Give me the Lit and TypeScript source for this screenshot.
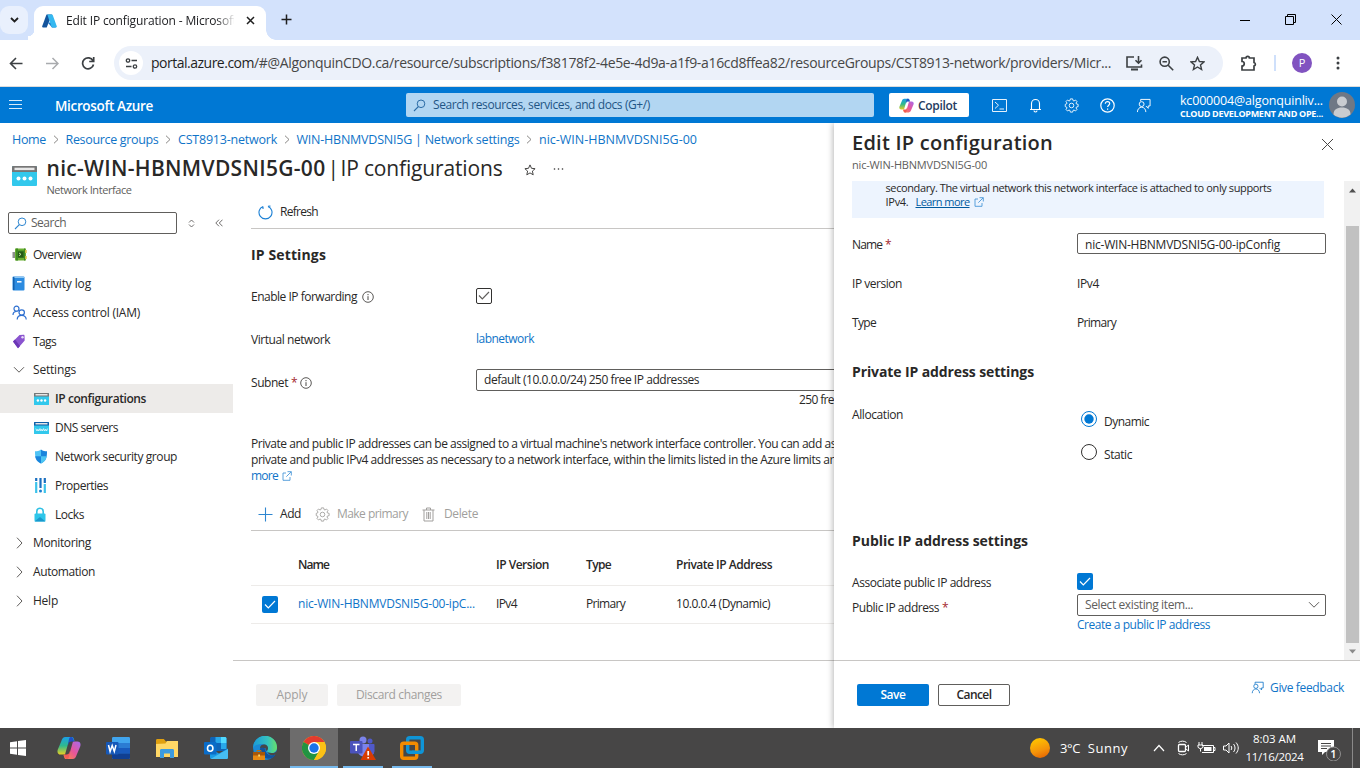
import { LitElement, html, svg, css, nothing } from "lit";
import { customElement, property } from "lit/decorators.js";

/** Text run whose tracking is adjusted so that it takes the requested width. */
@customElement("fit-text")
class FitText extends LitElement {
  @property({ type: Number }) w = 0;
  static styles = css`
    :host { display: inline-block; white-space: pre; flex: none; }
  `;
  render() { return html`<slot></slot>`; }
  updated() {
    this.style.letterSpacing = "0px";
    const r = document.createRange();
    r.selectNodeContents(this);
    const natural = r.getBoundingClientRect().width;
    const n = (this.textContent || "").length;
    if (this.w && n) this.style.letterSpacing = ((this.w - natural) / n).toFixed(3) + "px";
  }
}

const t = (text: string, w: number, cls = "") => html`<fit-text class=${cls} .w=${w}>${text}</fit-text>`;
const ico = (w: number, h: number, body: unknown, vb = `0 0 ${w} ${h}`, cls = "") =>
  html`<svg class="i ${cls}" width=${w} height=${h} viewBox=${vb} fill="none">${body}</svg>`;

const nicIcon = (w: number, h: number, dns = false) => ico(w, h, svg`
  <rect width="25" height="20" rx="1" fill="#32c8ec"/>
  <path d="M0 1a1 1 0 0 1 1-1h23a1 1 0 0 1 1 1v5H0z" fill=${dns ? "#0f5ea8" : "#767676"}/>
  <rect x="2.5" y="1.7" width="20" height="2.4" fill="#e8e8e8"/>
  ${dns
    ? svg`<path d="M3 11l2 4 1.500-3 1.500 3 2-4M10 11l1.500 4 1.500-3 1.500 3 1.500-4M16 11l2 4 1.500-3 1.500 3 1.500-4" stroke="#fff" stroke-width="1.200"/>`
    : svg`<circle cx="6.500" cy="12.500" r="2" fill="#fff"/><circle cx="12.500" cy="12.500" r="2" fill="#fff"/><circle cx="18.500" cy="12.500" r="2" fill="#fff"/>`}`, "0 0 25 20");

const gearPath = "M6.700 1h2.600l.4 1.900 1.100.5 1.700-1.100 1.700 1.700-1.100 1.700.5 1.100 1.900.4v2.600l-1.900.4-.5 1.100 1.100 1.700-1.700 1.700-1.700-1.100-1.100.5-.4 1.900H6.700l-.4-1.900-1.100-.5-1.700 1.100-1.700-1.700 1.100-1.700-.5-1.100L.9 9.800V7.200l1.500-.4.5-1.100-1.100-1.700 1.700-1.700 1.700 1.100 1.100-.5z";
const gear = (c: string, s = 15) => ico(s, s, svg`<path d=${gearPath} stroke=${c} stroke-width="1"/><circle cx="8" cy="8.500" r="2.600" stroke=${c}/>`, "0 0 16 17");
const feedback = (c: string, s = 15) => ico(s, s, svg`<path d="M5 3.500V1.500h10v7h-2v2.500l-2.500-2.500" stroke=${c}/><circle cx="6" cy="6.500" r="2.600" stroke=${c}/><path d="M1.500 15c0-3 2-5.200 4.500-5.200s4.500 2.200 4.500 5.200" stroke=${c}/>`, "0 0 16 16");
const check = (c = "#fff") => ico(12, 9, svg`<path d="M1 4.500l3.300 3.300L11 1" stroke=${c} stroke-width="1.200"/>`);
const info = ico(12, 12, svg`<circle cx="6" cy="6" r="5.300" stroke="#484644" stroke-width=".9"/><path d="M6 5.200v3.800M6 3v1.200" stroke="#484644" stroke-width="1"/>`);
const ext = ico(10, 10, svg`<path d="M4 2H1v7.300h7V6M5.500.7h3.800v3.800M9.200.8L4.300 5.700" stroke="#4a97d8" stroke-width=".9"/>`);
const mag = (c: string) => ico(13, 13, svg`<circle cx="8" cy="4.800" r="3.800" stroke=${c} stroke-width="1"/><path d="M5.300 7.600L1 12" stroke=${c} stroke-width="1.100"/>`);
const chevR = ico(7, 12, svg`<path d="M1 .7l5 5.300-5 5.300" stroke="#605e5c" stroke-width="1"/>`);
const chevD = ico(12, 8, svg`<path d="M1 1.200l5 5 5-5" stroke="#605e5c" stroke-width="1"/>`);
const crumb = ico(6, 9, svg`<path d="M1 .7l4 3.800-4 3.800" stroke="#7a7876" stroke-width=".9"/>`);

const copilot = (s: number) => html`<svg class="i" width=${s} height=${s} viewBox="0 0 24 24">
  <defs>
    <linearGradient id="ca" x1="0" y1="0" x2="0" y2="1"><stop offset="0" stop-color="#1a9fe8"/><stop offset=".5" stop-color="#2fb98d"/><stop offset="1" stop-color="#e8cf22"/></linearGradient>
    <linearGradient id="cb" x1="1" y1="0" x2="0" y2="1"><stop offset="0" stop-color="#a56af0"/><stop offset=".5" stop-color="#e8559a"/><stop offset="1" stop-color="#ff8f3c"/></linearGradient>
  </defs>
  <path d="M15 1H8.500C6 1 5 3 4.200 5.500L.8 13.500c-1 3 .3 5 2.900 5H8l3-10.500c.5-2 1.300-3 3.300-3h3.200L16.700 2.500C16.300 1.500 15.700 1 15 1z" fill="url(#ca)"/>
  <path d="M9 23h6.500c2.500 0 3.500-2 4.300-4.500l3.400-8c1-3-.3-5-2.900-5H16l-3 10.500c-.5 2-1.300 3-3.300 3H6.500l.8 2.500c.4 1 1 1.500 1.700 1.500z" fill="url(#cb)"/>
  <path d="M14.500 1c1.500 0 1.900 2.300 2.700 4.500H14c-1.400 0-2 .9-2.500 2.500L10.800 9.500 12 3c.4-1.400 1-2 2.500-2z" fill="#1f50c8"/>
  <path d="M9.500 23c-1.500 0-1.900-2.300-2.700-4.500H10c1.400 0 2-.9 2.500-2.500l.7-1.500L12 21c-.4 1.400-1 2-2.500 2z" fill="#f25a56"/>
</svg>`;

const sideIcons: Record<string, unknown> = {
  overview: ico(15, 15, svg`<path d="M3 1.500h11v12H3z" fill="#6aaf33"/><path d="M.5 5H3v6H.5z" fill="#8b8f8b"/><path d="M4 1.500v12h2v-2.500h6v2.500h1v-12h-1v2H6v-2z" fill="#3f8a22"/><rect x="6" y="4.500" width="5.500" height="6" fill="#265a18"/><path d="M7 6l2 1.300L7 8.700" stroke="#bfe39a"/><path d="M13 3h1.700v3H13zM13 9h1.700v3H13z" fill="#d8c043"/>`),
  log: ico(13, 15, svg`<rect x=".5" y=".5" width="12" height="14" rx="1" fill="#2c8be0"/><path d="M1 1h1.500v13H1z" fill="#1260ae"/><path d="M2.500 1.500h9.500" stroke="#8cc8f5"/><path d="M5 5.800h4.500" stroke="#fff" stroke-width="1.500"/>`),
  iam: ico(15, 15, svg`<circle cx="4.500" cy="3.700" r="2.500" stroke="#2d6fd0" stroke-width="1.200"/><path d="M1 10c0-2.200 1.500-3.500 3.500-3.500" stroke="#2d6fd0" stroke-width="1.200"/><circle cx="9.700" cy="7.500" r="2.700" stroke="#2d6fd0" stroke-width="1.200"/><path d="M5.200 14.500c0-2.600 2-4.200 4.500-4.200s4.500 1.600 4.500 4.200" stroke="#2d6fd0" stroke-width="1.200"/>`),
  tags: ico(15, 15, svg`<path d="M1 7.500L7.500 1l4-.2c.8 0 1 .4 1 1l.2 4.700L6 14.300z" fill="#8a54cf"/><path d="M1 7.500L6 14.300l2-2.300L3 5.500z" fill="#6b36b5"/><circle cx="10.500" cy="3.200" r="1.200" fill="#e9dcf8"/>`),
  ip: nicIcon(15, 12),
  dns: nicIcon(15, 12, true),
  nsg: ico(14, 15, svg`<path d="M7 .5c2 1.500 4 1.800 6 1.800 0 6-.5 9.500-6 12.200z" fill="#1a84dc"/><path d="M7 .5C5 2 3 2.300 1 2.300c0 6 .5 9.500 6 12.200z" fill="#4fc3f5"/><path d="M7 7.300h5.700c-.5 3.500-2 5.500-5.700 7.200z" fill="#4cc5f2"/><path d="M7 7.300H1.200c.6 3.500 2 5.500 5.800 7.200z" fill="#1a84dc"/>`),
  props: ico(13, 15, svg`<path d="M2.200 0v3M6.500 0v10M10.800 0v5" stroke="#1a6fc0" stroke-width="2.200"/><path d="M2.200 4v11M10.800 6v9" stroke="#3cc3ea" stroke-width="2.200"/><circle cx="6.500" cy="13" r="1.500" fill="#1a7fd0"/>`),
  locks: ico(12, 15, svg`<path d="M2.800 7V4.500a3.200 3.200 0 0 1 6.400 0V7" stroke="#2fc0e4" stroke-width="1.600"/><rect x=".5" y="6.500" width="11" height="8" rx="1" fill="#2ec6ea"/><path d="M.5 14.500l5.500-4.500 5.500 4.500z" fill="#1a98cc"/>`),
};

type Nav = { label: string; w: number; icon?: string; kind?: "group" | "open" | "sub"; on?: boolean };
const nav: Nav[] = [
  { label: "Overview", w: 48, icon: "overview" },
  { label: "Activity log", w: 58, icon: "log" },
  { label: "Access control (IAM)", w: 107, icon: "iam" },
  { label: "Tags", w: 23, icon: "tags" },
  { label: "Settings", w: 43, kind: "open" },
  { label: "IP configurations", w: 91, icon: "ip", kind: "sub", on: true },
  { label: "DNS servers", w: 63, icon: "dns", kind: "sub" },
  { label: "Network security group", w: 122, icon: "nsg", kind: "sub" },
  { label: "Properties", w: 53, icon: "props", kind: "sub" },
  { label: "Locks", w: 29, icon: "locks", kind: "sub" },
  { label: "Monitoring", w: 58, kind: "group" },
  { label: "Automation", w: 62, kind: "group" },
  { label: "Help", w: 25, kind: "group" },
];

@customElement("app-root")
class AppRoot extends LitElement {
  static styles = css`
    :host { display: flex; flex-direction: column; width: 1360px; height: 768px; overflow: hidden; background: #fff;
      font: 12px/16px "Open Sans", "Noto Sans", sans-serif; color: #292827; }
    * { box-sizing: border-box; }
    .i { display: block; flex: none; }
    .row { display: flex; align-items: center; }
    .link { color: #0f74c8; }
    .semi { font-weight: 600; }

    /* browser chrome */
    .tabs { height: 40px; flex: none; background: #d3e2fc; display: flex; align-items: flex-end; }
    .drop { width: 28px; height: 28px; margin-bottom: 6px; border-radius: 9px; background: #e9f0fd; display: grid; place-items: center; }
    .flare { width: 6px; height: 10px; background: radial-gradient(circle at 0 0, #d3e2fc 6px, #fff 6.500px); }
    .flare.r { width: 10px; background: radial-gradient(circle at 100% 0, #d3e2fc 9.500px, #fff 10px); }
    .tab { width: 232px; height: 34px; background: #fff; border-radius: 9px 9px 0 0; display: flex; align-items: center; padding: 0 11px 4px 8px; color: #202124; }
    .tab .name { margin-left: 9px; width: 168px; overflow: hidden; white-space: nowrap; mask-image: linear-gradient(90deg, #000 150px, transparent 170px); }
    .tab .x { margin: -2px 0 0 12px; }
    .plus { margin: 0 0 15px 5px; }
    .win { margin-left: auto; display: flex; gap: 35px; padding: 0 18px 15px 0; align-items: center; }
    .bar { height: 47px; flex: none; border-bottom: 1px solid #dcdcdc; display: flex; align-items: center; padding: 0 14px 0 9px; background: #fff; }
    .omni { margin-left: 19px; width: 1109px; height: 34px; border-radius: 17px; background: #ecf1fa; display: flex; align-items: center; padding-left: 5px; font-size: 14px; color: #474747; }
    .omni .tune { width: 24px; height: 24px; border-radius: 50%; background: #fff; display: grid; place-items: center; margin-right: 8px; }
    .omni .dark { color: #1f1f1f; }
    .omni .tools { display: flex; gap: 16px; margin-left: 15px; align-items: center; }
    .sep { width: 2px; height: 16px; background: #cfe0fb; margin: 0 16px 0 17px; }
    .pfp { width: 20px; height: 20px; border-radius: 50%; background: #8153c0; color: #fff; display: grid; place-items: center; font-size: 11px; margin-right: 24px; }

    /* portal header */
    .az { height: 36px; flex: none; background: #0078d4; display: flex; align-items: center; color: #fff; padding-left: 9px; }
    .brand { font-size: 13.500px; font-weight: 600; margin: 2px 0 0 33px; }
    .find { margin-left: 253px; width: 468px; height: 24px; background: #b2d6f2; border-radius: 2px; color: #1f5585; display: flex; align-items: center; gap: 7px; padding-left: 7px; }
    .cop { margin-left: 15px; width: 80px; height: 24px; border-radius: 2px; background: #fff; color: #243a5e; display: flex; align-items: center; gap: 4px; padding-left: 10px; font-weight: 600; }
    .cop fit-text { margin-top: 2px; }
    .hi { display: flex; margin-left: 13px; }
    .hi > div { width: 36px; height: 36px; display: grid; place-items: center; }
    .who { display: flex; flex-direction: column; margin-left: 18px; height: 27px; width: 149px; }
    .who .a { font-size: 12.500px; line-height: 15px; margin-top: 1px; }
    .who .b { font-size: 9px; line-height: 12px; font-weight: 700; }

    /* portal body */
    .body { flex: 1; min-height: 0; display: flex; }
    .left { width: 834px; height: 605px; overflow: hidden; display: flex; flex-direction: column; flex: none; }
    .crumbs { height: 33px; display: flex; align-items: center; gap: 6.750px; padding-left: 12px; flex: none; font-size: 12.500px; color: #0f74c8; }
    .title { height: 49px; display: flex; padding-left: 12px; flex: none; }
    .title > .i { margin-top: 10px; }
    .tt { margin: -1px 0 0 9.500px; display: flex; flex-direction: column; }
    .tt .h { font-size: 21px; line-height: 26px; display: flex; }
    .tt .bar1 { margin: 0 6px 0 2px; }
    .tt .s { font-size: 11px; line-height: 15px; margin-top: 1px; color: #605e5c; }
    .title > .dots { margin: 7px 0 0 17px; }
    .title > .star { margin: 8px 0 0 22px; }
    .cols { display: flex; flex: 1; min-height: 0; }
    .side { width: 233px; flex: none; padding-top: 7px; }
    .sr { display: flex; align-items: center; margin-bottom: 6px; padding-left: 8px; }
    .sbox { width: 169px; height: 22px; border: 1px solid #605e5c; border-radius: 2px; display: flex; align-items: center; gap: 4px; padding-left: 5px; color: #605e5c; }
    .sr .ud { margin-left: 11px; } .sr .cc { margin-left: 20px; }
    .nv { height: 29px; display: flex; align-items: center; padding-left: 12px; }
    .nv .sl { width: 21px; display: flex; align-items: center; }
    .nv fit-text { margin-top: 1px; }
    .nv.open { height: 28px; padding-bottom: 1px; } .nv.open .sl { padding-left: 1px; } .nv.group .sl { padding-left: 4px; }
    .nv.group { padding-bottom: 2px; }
    .nv.sub { padding-left: 34px; }
    .nv.on { background: #edebe9; font-weight: 600; }

    .main { flex: 1; min-width: 0; display: flex; flex-direction: column; }
    .scroll { height: 455px; padding-left: 18px; flex: none; overflow: hidden; }
    .refresh { height: 24px; border-bottom: 1px solid #c8c6c4; padding: 0 0 9px 7px; display: flex; align-items: center; gap: 7px; margin-bottom: 10px; }
    .h3 { font-size: 14px; font-weight: 700; line-height: 32px; height: 32px; }
    .main .h3 { display: block; margin-bottom: 3px; }
    .f { display: flex; align-items: center; height: 43px; width: 700px; }
    .f .l { width: 225px; display: flex; align-items: center; gap: 5px; padding-top: 3px; flex: none; }
    .f .req { margin: 0 -1px 0 -2px; }
    .req { color: #a4262c; }
    .cb { width: 16px; height: 16px; border-radius: 2px; display: grid; place-items: center; flex: none; }
    .cb.ol { border: 1px solid #323130; }
    .cb.fill { background: #0078d4; height: 17px; }
    .inp { height: 22px; border: 1px solid #605e5c; border-radius: 2px; display: flex; align-items: center; padding-left: 7px; flex: none; }
    .wide { width: 460px; margin-top: -4px; }
    .free { padding-left: 548px; height: 16px; margin-top: -11px; white-space: nowrap; }
    .para { margin-top: 28px; display: flex; flex-direction: column; align-items: flex-start; }
    .para .row { gap: 4px; }
    .cmd { height: 33px; margin-top: 14px; border-bottom: 1px solid #c8c6c4; display: flex; align-items: center; padding-left: 7px; width: 700px; gap: 14px; }
    .dis { color: #a19f9d; }
    .cmd > .g { display: flex; align-items: center; gap: 7px; }
    .cmd > .c3 { gap: 9px; }
    .tr { display: grid; grid-template-columns: 47px 198px 90px 90px 200px; align-items: center; width: 700px; height: 38px; border-bottom: 1px solid #edebe9; padding-bottom: 1px; }
    .tr.hd { height: 55px; padding: 14px 0 0; font-weight: 600; }
    .tr .cb { margin-left: 11px; }
    .foot { border-top: 1px solid #c8c6c4; height: 68px; display: flex; padding: 23px 0 0 23px; gap: 9px; flex: none; }
    .btn { height: 22px; border-radius: 2px; display: grid; place-items: center; font-weight: 600; flex: none; width: 72px; }
    .btn.off { background: #f3f2f1; color: #a19f9d; font-weight: 500; }
    .btn.w2 { width: 124px; }
    .btn.pri { background: #0078d4; color: #fff; }
    .btn.sec { border: 1px solid #605e5c; background: #fff; }

    /* edit panel */
    .panel { width: 526px; height: 605px; background: #fff; box-shadow: -1px 0 6px rgba(0, 0, 0, .28); clip-path: inset(0 0 0 -12px); display: flex; flex-direction: column; position: relative; }
    .ph { height: 58px; display: flex; justify-content: space-between; padding: 6px 26px 0 18px; flex: none; }
    .ph .c { display: flex; flex-direction: column; }
    .ph .h { font-size: 20px; line-height: 27px; font-weight: 600; }
    .ph .s { font-size: 11px; line-height: 16px; margin-top: 1px; color: #605e5c; }
    .ph > .i { margin-top: 9px; }
    .pb { height: 479px; display: flex; flex: none; }
    .form { width: 510px; padding-left: 18px; }
    .note { height: 37px; width: 472px; background: #edf4fe; padding-left: 33.500px; font-size: 11px; line-height: 14px; display: flex; flex-direction: column; margin-bottom: 7px; }
    .note .row { gap: 4px; }
    .u { text-decoration: underline; color: #005a9e; margin-left: 3px; }
    .pf { display: flex; align-items: center; height: 39px; }
    .pf .l { width: 225px; flex: none; display: flex; gap: 3px; padding-top: 1px; }
    .pf > .inp { margin-top: -2px; height: 21px; padding-top: 2px; }
    .w249 { width: 249px; }
    .ph3 { margin-top: 14px; }
    .radios { padding: 10px 0 0 4px; display: flex; flex-direction: column; gap: 16px; }
    .radio { display: flex; height: 17px; gap: 7px; }
    .radio fit-text { margin-top: 3px; }
    .alloc { display: flex; align-items: flex-start; height: 137px; padding-top: 13px; }
    .alloc .l { width: 225px; padding-top: 6px; }
    .assoc { height: 26px; margin-top: 11px; }
    .assoc .l { padding-top: 3px; }
    .pub { height: 22px; } .pub .l { padding-top: 6px; }
    .pub > .inp { margin-top: 0; height: 22px; padding-top: 0; }
    .sel { justify-content: space-between; padding-right: 5px; color: #605e5c; }
    .create { padding-left: 225px; margin-top: 1px; }
    .sb { width: 16px; background: #f1f1f1; display: flex; flex-direction: column; align-items: center; padding: 7px 0 6px 1px; }
    .thumb { width: 13px; height: 417px; background: #c1c1c1; margin: 33px 0 auto; flex: none; }
    .pfoot { border-top: 1px solid #c8c6c4; flex: 1; display: flex; padding: 23px 16px 0 23px; gap: 9px; }
    .fb { margin-left: auto; display: flex; gap: 6px; height: 16px; margin-top: -4px; align-items: center; }
    .fb .i { margin-top: -2px; }

    /* taskbar */
    .task { height: 40px; flex: none; background: #474646; display: flex; color: #fff; font-size: 13px; }
    .app { width: 49px; height: 40px; display: grid; place-items: center; }
    .app.start { width: 36px; margin-right: 8px; }
    .app.active { width: 48px; background: #6d6c6c; border-bottom: 2px solid #76b9ed; padding-top: 2px; margin-left: 1px; }
    .app.run { width: 40px; border-bottom: 2px solid #76b9ed; margin-left: 5px; padding-top: 2px; }
    .app.run + .run { margin-left: 9px; }
    .tray { margin-left: auto; display: flex; align-items: center; }
    .sun { width: 20px; height: 20px; border-radius: 50%; background: linear-gradient(160deg, #ffc400 10%, #f5930a 60%, #e05a00); margin-right: 10px; }
    .clock { display: flex; flex-direction: column; align-items: center; font-size: 11.500px; line-height: 18px; width: 65px; margin-left: 2px; padding-bottom: 1px; }
    .edge { width: 1px; height: 40px; background: #8a8989; margin: 0 7px 0 11px; }
  `;

  chrome() {
    return html`
      <div class="tabs">
        <div class="drop">${ico(9, 6, svg`<path d="M1 1l3.500 3.500L8 1" stroke="#1f1f1f" stroke-width="1.800"/>`)}</div>
        <div class="flare"></div>
        <div class="tab">
          ${ico(15, 14, svg`<path d="M5 .5h5L4.700 13.500H1c-.8 0-1-.6-.8-1.200L4.300 1c.2-.4.400-.5.700-.5z" fill="#14549c"/><path d="M5.800 8.500h6l2 5H10z" fill="#1272c8"/><path d="M5.300.5H10c.4 0 .6.200.7.500l4.100 11.300c.2.600-.1 1.200-.8 1.200h-3.500c-.6 0-.9-.5-1.100-1z" fill="#35b8f0"/>`)}
          <div class="name">${t("Edit IP configuration - Microsoft", 171)}</div>
          <span class="x">${ico(9, 9, svg`<path d="M1 1l7 7M8 1L1 8" stroke="#1f1f1f" stroke-width="1.500"/>`)}</span>
        </div>
        <div class="flare r"></div>
        <div class="plus">${ico(11, 11, svg`<path d="M5.500.500v10M.5 5.500h10" stroke="#1f1f1f" stroke-width="1.500"/>`)}</div>
        <div class="win">
          ${ico(10, 10, svg`<path d="M0 5.500h10" stroke="#000"/>`)}
          ${ico(11, 11, svg`<path d="M.5 2.500h8v8h-8zM2.500 2.500v-2h8v8h-2" stroke="#000"/>`)}
          ${ico(11, 11, svg`<path d="M.5.5l10 10M10.500.5l-10 10" stroke="#000"/>`)}
        </div>
      </div>
      <div class="bar">
        ${ico(14, 13, svg`<path d="M13.500 6.500h-12M7 1L1.500 6.500 7 12" stroke="#3c4043" stroke-width="1.600"/>`)}
        ${ico(36, 13, svg`<path d="M23 6.500h12M29.500 1L35 6.500 29.500 12" stroke="#a9abae" stroke-width="1.500"/>`)}
        ${ico(36, 14, svg`<path d="M34 4.800A5.500 5.500 0 1 0 34.500 8.500M34.700 1v4.500h-4.500" stroke="#3c4043" stroke-width="1.700"/>`)}
        <div class="omni">
          <div class="tune">${ico(13, 11, svg`<circle cx="3" cy="2.500" r="1.700" stroke="#3c4043" stroke-width="1.300"/><path d="M6.500 2.500H12M1 8.500h5.500" stroke="#3c4043" stroke-width="1.500"/><circle cx="10" cy="8.500" r="1.700" stroke="#3c4043" stroke-width="1.300"/>`)}</div>
          ${t("portal.azure.com", 103, "dark")}${t("/#@AlgonquinCDO.ca/resource/subscriptions/f38178f2-4e5e-4d9a-a1f9-a16cd8ffea82/resourceGroups/CST8913-network/providers/Micr...", 857)}
          <div class="tools">
            ${ico(17, 15, svg`<path d="M8 1H1v10h14.500V8.500" stroke="#3c4043" stroke-width="1.600"/><path d="M5 12.500h7v2H5z" fill="#3c4043"/><path d="M12.500 0v7M9.500 4.200l3 3 3-3" stroke="#3c4043" stroke-width="1.600"/>`)}
            ${ico(15, 15, svg`<circle cx="5.700" cy="5.700" r="4.600" stroke="#3c4043" stroke-width="1.600"/><path d="M9.200 9.200l5 5M3.500 5.700h4.400" stroke="#3c4043" stroke-width="1.600"/>`)}
            ${ico(15, 15, svg`<path d="M7.500 1.300l1.900 4.200 4.600.4-3.500 3 1.100 4.600-4.100-2.500-4.100 2.500 1.100-4.600-3.500-3 4.600-.4z" stroke="#3c4043" stroke-width="1.400"/>`)}
          </div>
        </div>
        ${ico(34, 16, svg`<path d="M19 3h4a1.700 1.700 0 0 1 3.400 0H31v4.500a1.800 1.800 0 0 1 0 3.500v4H19v-4c3 0 3-4.500 0-4.500z" stroke="#3c4043" stroke-width="1.700"/>`)}
        <div class="sep"></div>
        <div class="pfp">P</div>
        ${ico(4, 14, svg`<circle cx="2" cy="2" r="1.500" fill="#3c4043"/><circle cx="2" cy="7" r="1.500" fill="#3c4043"/><circle cx="2" cy="12" r="1.500" fill="#3c4043"/>`)}
      </div>`;
  }

  header() {
    return html`<div class="az">
      ${ico(13, 10, svg`<path d="M0 .5h13M0 4.500h13M0 8.500h13" stroke="#d8ebf9"/>`)}
      ${t("Microsoft Azure", 98, "brand")}
      <div class="find">${mag("#2a6ba5")}${t("Search resources, services, and docs (G+/)", 217)}</div>
      <div class="cop">${copilot(15)}${t("Copilot", 39)}</div>
      <div class="hi">
        <div>${ico(15, 13, svg`<path d="M.5.5h14v12H.5zM3 3l3.500 3.200L3 9.500M7.500 10h4.500" stroke="#e5f1fb"/>`)}</div>
        <div>${ico(13, 15, svg`<path d="M1 11.500h11M2.500 11.500V5.500a4 4 0 0 1 8 0v6M5 12.500a1.500 1.500 0 0 0 3 0" stroke="#fff" stroke-width="1.100"/>`)}</div>
        <div>${gear("#fff", 15)}</div>
        <div>${ico(15, 15, svg`<circle cx="7.500" cy="7.500" r="6.700" stroke="#fff" stroke-width="1.200"/><path d="M5.300 5.800c0-3 4.400-2.700 4.400-.2 0 1.500-2.100 1.700-2.100 3.500M7.600 10.400v1.300" stroke="#fff" stroke-width="1.200"/>`)}</div>
        <div>${feedback("#fff")}</div>
      </div>
      <div class="who">${t("kc000004@algonquinliv...", 143, "a")}${t("CLOUD DEVELOPMENT AND OPE...", 143, "b")}</div>
      ${ico(26, 26, svg`<circle cx="13" cy="13" r="13" fill="#6f7885"/><circle cx="13" cy="9.500" r="5" fill="#c9ccd0"/><path d="M4.500 22.500c0-5 3.500-7 8.500-7s8.500 2 8.500 7A13 13 0 0 1 4.500 22.500z" fill="#c9ccd0"/>`)}
    </div>`;
  }

  navRow(n: Nav) {
    return html`<div class="nv ${n.kind || ""} ${n.on ? "on" : ""}">
      <span class="sl">${n.icon ? sideIcons[n.icon] : n.kind === "open" ? chevD : chevR}</span>${t(n.label, n.w)}
    </div>`;
  }

  left() {
    const crumbs: [string, number][] = [["Home", 34], ["Resource groups", 93], ["CST8913-network", 99], ["WIN-HBNMVDSNI5G | Network settings", 223], ["nic-WIN-HBNMVDSNI5G-00", 158]];
    return html`<div class="left">
      <div class="crumbs">${crumbs.map(([c, w], i) => html`${i ? crumb : nothing}${t(c, w)}`)}</div>
      <div class="title">
        ${nicIcon(25, 20)}
        <div class="tt">
          <div class="h">${t("nic-WIN-HBNMVDSNI5G-00", 279, "semi")}${t("|", 7, "bar1")}${t("IP configurations", 162)}</div>
          ${t("Network Interface", 85, "s")}
        </div>
        ${ico(12, 12, svg`<path d="M6 .9l1.500 3.400 3.600.4L8.400 7.100l.8 3.700L6 8.900l-3.200 1.900.8-3.700L.9 4.700l3.600-.4z" stroke="#323130" stroke-width=".9"/>`, "0 0 12 12", "star")}
        ${ico(12, 12, svg`<circle cx="1.500" cy="6" r=".8" fill="#323130"/><circle cx="5.500" cy="6" r=".8" fill="#323130"/><circle cx="9.500" cy="6" r=".8" fill="#323130"/>`, "0 0 12 12", "dots")}
      </div>
      <div class="cols">
        <div class="side">
          <div class="sr">
            <div class="sbox">${mag("#2e86d0")}${t("Search", 35)}</div>
            ${ico(7, 9, svg`<path d="M1 3.500l2.500-2.500L6 3.500M1 5.500L3.500 8 6 5.500" stroke="#605e5c" stroke-width=".9"/>`, "0 0 7 9", "ud")}
            ${ico(8, 8, svg`<path d="M4 .7L.8 4 4 7.300M7.500.7L4.300 4l3.200 3.300" stroke="#605e5c" stroke-width=".9"/>`, "0 0 8 8", "cc")}
          </div>
          ${nav.map((n) => this.navRow(n))}
        </div>
        <div class="main">
          <div class="scroll">
            <div class="refresh">${ico(15, 15, svg`<path d="M5 1.400a6.500 6.500 0 1 0 5 0M5 1.400V4M10 1.400l2.500-.4" stroke="#1a7fd4" stroke-width="1.100"/>`)}${t("Refresh", 38)}</div>
            ${t("IP Settings", 75, "h3")}
            <div class="f"><div class="l">${t("Enable IP forwarding", 106)}${info}</div><div class="cb ol">${check("#605e5c")}</div></div>
            <div class="f"><div class="l">${t("Virtual network", 79)}</div>${t("labnetwork", 58, "link")}</div>
            <div class="f"><div class="l">${t("Subnet", 37)}${t("*", 5, "req")}${info}</div><div class="inp wide">${t("default (10.0.0.0/24) 250 free IP addresses", 215)}</div></div>
            <div class="free">${t("250 free", 41)}</div>
            <div class="para">
              ${t("Private and public IP addresses can be assigned to a virtual machine's network interface controller. You can add as", 585)}
              ${t("private and public IPv4 addresses as necessary to a network interface, within the limits listed in the Azure limits ar", 583)}
              <span class="row link">${t("more", 27)}${ext}</span>
            </div>
            <div class="cmd">
              <div class="g">${ico(15, 15, svg`<path d="M7.500.500v14M.5 7.500h14" stroke="#2e86d0" stroke-width="1.100"/>`)}${t("Add", 21)}</div>
              <div class="g dis">${gear("#a19f9d", 15)}${t("Make primary", 71)}</div>
              <div class="g dis c3">${ico(13, 15, svg`<path d="M.5 3h12M4.500 3V1h4v2M2 3v11h9V3M4.800 5v7M6.500 5v7M8.200 5v7" stroke="#a19f9d"/>`)}${t("Delete", 34)}</div>
            </div>
            <div class="tr hd"><span></span>${t("Name", 31)}${t("IP Version", 53)}${t("Type", 25)}${t("Private IP Address", 96)}</div>
            <div class="tr"><div class="cb fill">${check()}</div>${t("nic-WIN-HBNMVDSNI5G-00-ipC...", 177, "link")}${t("IPv4", 21)}${t("Primary", 39)}${t("10.0.0.4 (Dynamic)", 94)}</div>
          </div>
          <div class="foot"><div class="btn off">${t("Apply", 31)}</div><div class="btn off w2">${t("Discard changes", 86)}</div></div>
        </div>
      </div>
    </div>`;
  }

  panel() {
    return html`<div class="panel">
      <div class="ph">
        <div class="c">${t("Edit IP configuration", 201, "h")}${t("nic-WIN-HBNMVDSNI5G-00", 135, "s")}</div>
        ${ico(13, 13, svg`<path d="M1 1l11 11M12 1L1 12" stroke="#484644" stroke-width="1"/>`)}
      </div>
      <div class="pb">
        <div class="form">
          <div class="note">
            ${t("secondary. The virtual network this network interface is attached to only supports", 386)}
            <div class="row">${t("IPv4.", 23)}${t("Learn more", 54, "u")}${ext}</div>
          </div>
          <div class="pf"><div class="l">${t("Name", 30)}${t("*", 5, "req")}</div><div class="inp w249">${t("nic-WIN-HBNMVDSNI5G-00-ipConfig", 195)}</div></div>
          <div class="pf"><div class="l">${t("IP version", 50)}</div>${t("IPv4", 22)}</div>
          <div class="pf"><div class="l">${t("Type", 24)}</div>${t("Primary", 39)}</div>
          <div class="ph3">${t("Private IP address settings", 182, "h3")}</div>
          <div class="alloc">
            <div class="l">${t("Allocation", 51)}</div>
            <div class="radios">
              <div class="radio">${ico(16, 16, svg`<circle cx="8" cy="8" r="7.500" stroke="#0078d4"/><circle cx="8" cy="8" r="4.700" fill="#0078d4"/>`)}${t("Dynamic", 45)}</div>
              <div class="radio">${ico(16, 16, svg`<circle cx="8" cy="8" r="7.500" stroke="#323130"/>`)}${t("Static", 28)}</div>
            </div>
          </div>
          <div class="ph4">${t("Public IP address settings", 176, "h3")}</div>
          <div class="pf assoc"><div class="l">${t("Associate public IP address", 139)}</div><div class="cb fill">${check()}</div></div>
          <div class="pf pub"><div class="l">${t("Public IP address", 87)}${t("*", 5, "req")}</div><div class="inp w249 sel">${t("Select existing item...", 108)}${chevD}</div></div>
          <div class="create link">${t("Create a public IP address", 133)}</div>
        </div>
        <div class="sb">
          ${ico(7, 5, svg`<path d="M0 4.500L3.500.5 7 4.500z" fill="#505050"/>`)}
          <div class="thumb"></div>
          ${ico(7, 5, svg`<path d="M0 .5l3.500 4L7 .5z" fill="#8a8a8a"/>`)}
        </div>
      </div>
      <div class="pfoot">
        <div class="btn pri">${t("Save", 25)}</div><div class="btn sec">${t("Cancel", 35)}</div>
        <div class="fb link">${feedback("#0f74c8", 13)}${t("Give feedback", 74)}</div>
      </div>
    </div>`;
  }

  taskbar() {
    return html`<div class="task">
      <div class="app start">${ico(16, 16, svg`<path d="M0 2.200l7-1v6.300H0zM8 1l8-1v7.500H8zM0 8.500h7v6.300l-7-1zM8 8.500h8V16l-8-1z" fill="#fff"/>`)}</div>
      <div class="app">${copilot(24)}</div>
      <div class="app">${ico(24, 22, svg`<rect x="6" width="18" height="22" rx="1.500" fill="#2b7cd3"/><path d="M6 1.500C6 .7 6.700 0 7.500 0h15c.8 0 1.500.7 1.500 1.500V6H6z" fill="#41a5ee"/><path d="M6 11h18v5.500H6z" fill="#185abd"/><path d="M6 16.500h18v4c0 .8-.7 1.500-1.500 1.500h-15c-.8 0-1.500-.7-1.500-1.500z" fill="#103f91"/><rect y="5" width="12.500" height="12.500" rx="1" fill="#1658b8"/><path d="M2.500 8l1.600 6.500L6.200 8.500l2.100 6L10 8" stroke="#fff" stroke-width="1.500"/>`)}</div>
      <div class="app">${ico(22, 19, svg`<path d="M0 1.500C0 .7.500 0 1.300 0h6.500L10 2.500h12V6H0z" fill="#e0a010"/><path d="M0 5l9.500-.5L11 2h11v16H0z" fill="#ffd766"/><path d="M4 19v-7.500c0-.8.500-1.500 1.500-1.500h11c1 0 1.500.7 1.500 1.500V19h-4v-4.500H8V19z" fill="#3c9be0"/>`)}</div>
      <div class="app">${ico(24, 22, svg`<path d="M6 1.500C6 .7 6.700 0 7.500 0H21c.8 0 1.500.7 1.500 1.500V14H6z" fill="#0f64b8"/><path d="M11.500 0H17v6h-5.500zM17 6h5.500v6H17z" fill="#28a8ea"/><path d="M17 0h4c.8 0 1.500.7 1.500 1.500V6H17z" fill="#50d9ff"/><path d="M6 11.500l9 5 9-5v9c0 .8-.7 1.500-1.500 1.500h-15c-.8 0-1.500-.7-1.500-1.500z" fill="#1a9be6"/><path d="M6.500 22L24 12v8.500c0 .8-.7 1.500-1.500 1.500z" fill="#46bdf2"/><rect y="5" width="12.500" height="12.500" rx="1" fill="#0a6cc8"/><ellipse cx="6.200" cy="11.200" rx="2.700" ry="3" stroke="#fff" stroke-width="1.600"/>`)}</div>
      <div class="app"><svg class="i" width="24" height="24" viewBox="0 0 24 24"><defs><linearGradient id="eg" x1="0" x2="1"><stop offset="0" stop-color="#1a9ad8"/><stop offset=".6" stop-color="#35c1c0"/><stop offset="1" stop-color="#67e06a"/></linearGradient></defs><circle cx="12" cy="12" r="12" fill="#1a8ad6"/><path d="M0 12A12 12 0 0 1 24 11.500c0 3.500-2.500 5.500-5.500 5.500-2.500 0-4.500-.8-4.500-2 0-.7 1-1 1-2.800C15 9.800 12.500 8 9 8 4 8 1 10 0 12z" fill="url(#eg)"/><path d="M7 12c0-3 3-4 5-3.500 2 .5 3 2 3 3.700 0 1.800-1 2.100-1 2.800-1-.5-2-1.500-1.500-3z" fill="#474646"/><path d="M7 12.500c-1 7 6 12.500 12.500 9.200 1.800-1 2.600-2.200 3-3.200-4 2-10 .5-10.500-6-1.500-1.500-4-1.500-5 0z" fill="#12539c"/><path d="M23.800 14.500c-1 2-3 2.800-5.300 2.500-2.500 0-4.500-.8-4.500-2 1 4 5 5 8.500 3.500.8-1 1.200-2.500 1.300-4z" fill="#474646"/><path d="M0 16h12v8H0z" fill="#e88a12"/><path d="M0 16h12v3.500H0z" fill="#a85708"/><path d="M4 16v-1.500h4V16" stroke="#c07010" fill="none"/><rect x="5.200" y="18.500" width="1.800" height="2" fill="#ffd66a"/></svg></div>
      <div class="app active">${ico(24, 24, svg`<circle cx="12" cy="12" r="12" fill="#fbc116"/><path d="M12 12L1.600 6A12 12 0 0 1 22.400 6H12z" fill="#e33b2e"/><path d="M1.600 6A12 12 0 0 0 12 24l5.200-9L12 12z" fill="#229342"/><path d="M12 6h10.400A12 12 0 0 1 12 24l5.200-9z" fill="#fbc116"/><circle cx="12" cy="12" r="6" fill="#fff"/><circle cx="12" cy="12" r="4.700" fill="#1a73e8"/>`)}</div>
      <div class="app run">${ico(26, 24, svg`<circle cx="20" cy="5" r="2.500" fill="#5059c9"/><circle cx="13" cy="4" r="3.500" fill="#7b83eb"/><path d="M8 8h15c.6 0 1 .4 1 1v7c0 6-15 7-16 0z" fill="#7b83eb"/><path d="M19 8h4.500c.6 0 1 .4 1 1v6c0 2-2 4-5.500 4z" fill="#5059c9"/><rect y="5" width="12.500" height="12.500" rx="1" fill="#4b53bc"/><path d="M3 8.500h6.500M6.250 8.500V15" stroke="#fff" stroke-width="1.500"/><path d="M18 10.500L26 24H10.500z" fill="#d83b01"/><path d="M18.200 15v4.500M18.200 21v1.500" stroke="#fff" stroke-width="1.700"/>`)}</div>
      <div class="app run">${ico(24, 24, svg`<rect x="7.700" y="1.700" width="14.600" height="14.600" rx="2" stroke="#0f95d7" stroke-width="3.400"/><rect x="1.700" y="7.200" width="15" height="15" rx="2" stroke="#f38b00" stroke-width="3.400"/><path d="M12 16.300h8.300" stroke="#0f95d7" stroke-width="3.400"/>`)}</div>
      <div class="tray">
        <div class="sun"></div>
        ${t("3°C", 20)}${t("  Sunny", 48)}
        ${ico(38, 14, svg`<path d="M26 10l5-5.500L36 10" stroke="#fff" stroke-width="1.200"/>`)}
        ${ico(26, 16, svg`<path d="M12.500 2.500c2-1.800 6-1.800 8 0M12.500 13.500c2 1.800 6 1.800 8 0" stroke="#fff"/><rect x="12.500" y="4.500" width="7" height="7" rx="1" stroke="#fff" stroke-width="1.300"/><path d="M20 7l2.500-2v6L20 9" stroke="#fff"/>`)}
        ${ico(24, 14, svg`<path d="M10 4.500h11.500v7H10M22 6.500h1v3h-1M7 1v3M10 1v3M6 4h5v2c0 2-5 2-5 0zM8.500 7.500v3" stroke="#fff"/><path d="M12 6h7.500v4H12z" fill="#fff"/>`)}
        ${ico(24, 14, svg`<path d="M7.500 5h2.500l3-3v10l-3-3H7.500z" stroke="#fff"/><path d="M15 5c1 1.300 1 2.700 0 4M17.500 3c2 2.500 2 5.500 0 8M20 1.500c3 3.500 3 7.500 0 11" stroke="#fff"/>`)}
        <div class="clock">${t("8:03 AM", 43)}${t("11/16/2024", 58)}</div>
        ${ico(34, 26, svg`<path d="M11 5h16v12H18l-3 3v-3h-4z" fill="#fff"/><path d="M14 8.500h10M14 11h10M14 13.500h6" stroke="#474646"/><circle cx="26.500" cy="19" r="7" fill="#474646" stroke="#8f8e8e"/><text x="26.500" y="23" text-anchor="middle" font-size="11" font-weight="600" fill="#fff">1</text>`)}
        <div class="edge"></div>
      </div>
    </div>`;
  }

  render() {
    return html`${this.chrome()}${this.header()}<div class="body">${this.left()}${this.panel()}</div>${this.taskbar()}`;
  }
}
